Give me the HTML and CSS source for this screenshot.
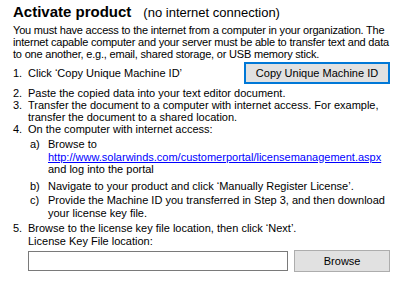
FILE: index.html
```html
<!DOCTYPE html>
<html>
<head>
<meta charset="utf-8">
<link rel="stylesheet" href="styles.css">
</head>
<body>
<div class="page">
  <div class="title-row">
    <span class="title">Activate product</span>
    <span class="subtitle">(no internet connection)</span>
  </div>
  <p class="intro">You must have access to the internet from a computer in your organization. The internet capable computer and your server must be able to transfer text and data to one another, e.g., email, shared storage, or USB memory stick.</p>
  <div class="step step-1">
    <span class="num">1.</span>
    <span class="text">Click ‘Copy Unique Machine ID’</span>
    <button class="btn btn-focus">Copy Unique Machine ID</button>
  </div>
  <div class="step step-2">
    <span class="num">2.</span>
    <span class="text">Paste the copied data into your text editor document.</span>
  </div>
  <div class="step">
    <span class="num">3.</span>
    <span class="text">Transfer the document to a computer with internet access. For example, transfer the document to a shared location.</span>
  </div>
  <div class="step">
    <span class="num">4.</span>
    <span class="text">On the computer with internet access:</span>
  </div>
  <div class="sub sub-a">
    <span class="letter">a)</span>
    <span class="text">Browse to<br><a class="link" href="#">http://www.solarwinds.com/customerportal/licensemanagement.aspx</a><br>and log into the portal</span>
  </div>
  <div class="sub sub-b">
    <span class="letter">b)</span>
    <span class="text">Navigate to your product and click ‘Manually Register License’.</span>
  </div>
  <div class="sub sub-c">
    <span class="letter">c)</span>
    <span class="text">Provide the Machine ID you transferred in Step 3, and then download your license key file.</span>
  </div>
  <div class="step step-5">
    <span class="num">5.</span>
    <span class="text">Browse to the license key file location, then click ‘Next’.<br>License Key File location:</span>
  </div>
  <div class="file-row">
    <div class="input"></div>
    <button class="btn btn-browse">Browse</button>
  </div>
</div>
</body>
</html>
```

FILE: styles.css
```css
html, body {
  margin: 0;
  padding: 0;
  background: #ffffff;
}
body {
  width: 403px;
  height: 282px;
  overflow: hidden;
  font-family: "Liberation Sans", Arial, sans-serif;
  font-size: 11px;
  line-height: 12px;
  color: #000000;
}
.page {
  padding: 3px 13px 0 13px;
}
.title-row {
  display: flex;
  align-items: baseline;
  height: 19px;
}
.title {
  font-weight: bold;
  font-size: 15px;
  line-height: 17px;
}
.subtitle {
  font-size: 13px;
  margin-left: 12px;
}
.intro {
  margin: 2px 0 0 0;
  width: 380px;
  letter-spacing: -0.2px;
}
.step {
  display: flex;
  align-items: flex-start;
}
.num {
  width: 15px;
  flex: none;
}
.step .text {
  width: 362px;
}
.step-1 {
  align-items: center;
  margin-top: 2px;
  height: 22px;
}
.step-1 .text {
  width: auto;
}
.step-2 {
  margin-top: 3px;
}
.btn {
  font-family: "Liberation Sans", Arial, sans-serif;
  font-size: 11px;
  background: #e1e1e1;
  color: #000;
  padding: 0;
  margin: 0;
}
.btn-focus {
  margin-left: auto;
  width: 146px;
  height: 22px;
  border: 2px solid #0078d7;
}
.sub {
  display: flex;
  padding-left: 17px;
}
.letter {
  width: 18px;
  flex: none;
}
.sub .text {
  width: 340px;
  line-height: 12.5px;
}
.sub-a { margin-top: 3px; }
.sub-b { margin-top: 4px; }
.sub-c { margin-top: 2px; }
.step-5 { margin-top: 3px; }
.step-5 .text { line-height: 13px; }
.link {
  color: #0000ff;
  text-decoration: underline;
}
.file-row {
  display: flex;
  align-items: center;
  margin-top: 2px;
  padding-left: 15px;
}
.input {
  width: 259px;
  height: 18px;
  border: 1px solid #7a7a7a;
  background: #fff;
}
.btn-browse {
  margin-left: 6px;
  width: 96px;
  height: 22px;
  border: 1px solid #adadad;
}
```
